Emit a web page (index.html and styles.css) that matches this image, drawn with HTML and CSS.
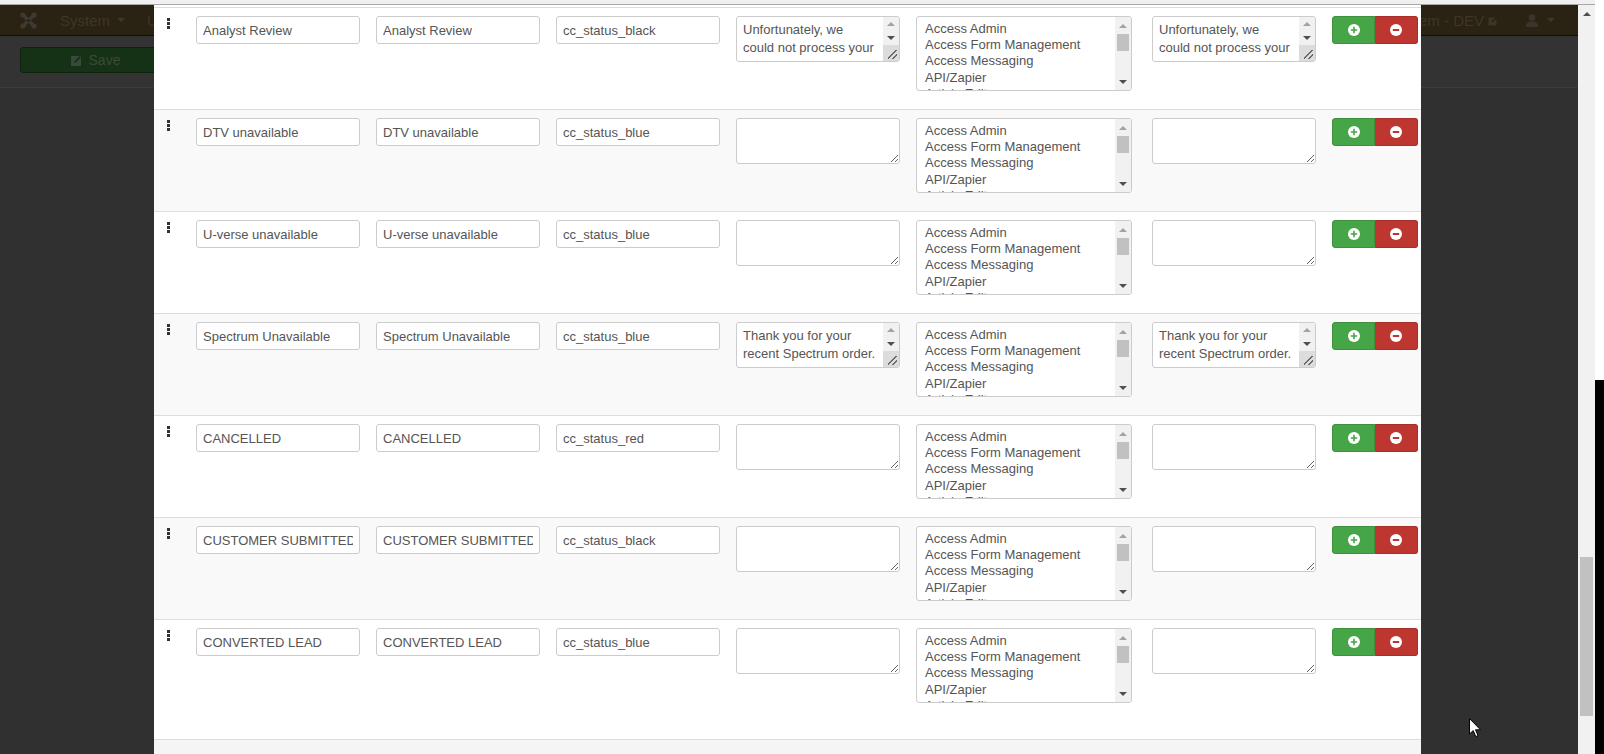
FILE: index.html
```html
<!DOCTYPE html>
<html lang="en">
<head>
    <meta charset="UTF-8">
    <title>Statuses - DEV</title>
    <link rel="stylesheet" href="styles.css">
</head>
<body>
<div class="screen">
    <div class="window">
        <div class="topbar"></div>
        <div class="viewport">
            <div class="page">
                <header class="navbar">
                    <svg class="logo" width="17" height="17" viewBox="0 0 17 17">
                        <circle cx="3" cy="3" r="2.6" fill="#3d3a33"/>
                        <circle cx="14" cy="3" r="2.6" fill="#3d3a33"/>
                        <circle cx="3" cy="14" r="2.6" fill="#3d3a33"/>
                        <circle cx="14" cy="14" r="2.6" fill="#3d3a33"/>
                        <path d="M3 3 L14 14 M14 3 L3 14" stroke="#3d3a33" stroke-width="3.4"/>
                        <circle cx="8.5" cy="8.5" r="1.6" fill="#2a2212"/>
                    </svg>
                    <span class="nav-item">System <i class="caret"></i></span>
                    <span class="nav-item">Users <i class="caret"></i></span>
                    <div class="nav-right">
                        <span class="nav-item">Comm System - DEV
                            <svg width="11" height="11" viewBox="0 0 11 11"><rect x="0.5" y="2.5" width="8" height="8" fill="#3a3528"/><path d="M4 7 L10 1 M6 0.8 H10.2 V5" stroke="#2a2212" stroke-width="1.6" fill="none"/></svg>
                        </span>
                        <span class="nav-user">
                            <svg width="12" height="13" viewBox="0 0 12 13"><circle cx="6" cy="3.6" r="3.4" fill="#3a3528"/><path d="M0 13 C0 8 2.5 7.5 6 7.5 C9.5 7.5 12 8 12 13 Z" fill="#3a3528"/></svg>
                            <i class="caret"></i>
                        </span>
                    </div>
                </header>
                <div class="toolbar">
                    <button class="btn-save" type="button">
                        <svg width="11" height="11" viewBox="0 0 11 11"><rect x="0" y="1" width="10" height="10" rx="1" fill="#3a4a3a"/><path d="M3 8 L3.5 6 L8.5 1 L10 2.5 L5 7.5 Z" fill="#163418"/></svg>
                        Save
                    </button>
                </div>

                <div class="modal">
                    <div class="modal-body">
                        <div class="status-row">
                            <div class="handle"><span></span><span></span><span></span></div>
                            <input class="field" type="text" value="Analyst Review">
                            <input class="field" type="text" value="Analyst Review">
                            <input class="field" type="text" value="cc_status_black">
                            <div class="scroll-box">
                                <textarea class="msg msg-long">Unfortunately, we could not process your order and had to cancel it.</textarea>
                                <div class="sbar sbar-msg"><i class="arr-up"></i><i class="arr-down"></i><span class="sbar-corner"></span></div>
                            </div>
                            <div class="scroll-box list-box">
                                <select class="groups" multiple>
                                    <option>Access Admin</option><option>Access Form Management</option><option>Access Messaging</option><option>API/Zapier</option><option>Article Editor</option><option>Article Manager</option><option>Billing</option><option>Customer Service</option><option>Lead Manager</option><option>Reports</option><option>Super User</option>
                                </select>
                                <div class="sbar sbar-list"><i class="arr-up"></i><span class="sbar-thumb"></span><i class="arr-down"></i></div>
                            </div>
                            <div class="scroll-box">
                                <textarea class="msg msg-long">Unfortunately, we could not process your order and had to cancel it.</textarea>
                                <div class="sbar sbar-msg"><i class="arr-up"></i><i class="arr-down"></i><span class="sbar-corner"></span></div>
                            </div>
                            <div class="btn-group">
                                <button class="btn-add" type="button"><svg width="12" height="12" viewBox="0 0 12 12"><circle cx="6" cy="6" r="6" fill="#fff"/><path d="M6 2.8 V9.2 M2.8 6 H9.2" stroke="#46a546" stroke-width="1.6"/></svg></button>
                                <button class="btn-remove" type="button"><svg width="12" height="12" viewBox="0 0 12 12"><circle cx="6" cy="6" r="6" fill="#fff"/><path d="M2.8 6 H9.2" stroke="#bd362f" stroke-width="2"/></svg></button>
                            </div>
                        </div>

                        <div class="status-row">
                            <div class="handle"><span></span><span></span><span></span></div>
                            <input class="field" type="text" value="DTV unavailable">
                            <input class="field" type="text" value="DTV unavailable">
                            <input class="field" type="text" value="cc_status_blue">
                            <textarea class="msg"></textarea>
                            <div class="scroll-box list-box">
                                <select class="groups" multiple>
                                    <option>Access Admin</option><option>Access Form Management</option><option>Access Messaging</option><option>API/Zapier</option><option>Article Editor</option><option>Article Manager</option><option>Billing</option><option>Customer Service</option><option>Lead Manager</option><option>Reports</option><option>Super User</option>
                                </select>
                                <div class="sbar sbar-list"><i class="arr-up"></i><span class="sbar-thumb"></span><i class="arr-down"></i></div>
                            </div>
                            <textarea class="msg"></textarea>
                            <div class="btn-group">
                                <button class="btn-add" type="button"><svg width="12" height="12" viewBox="0 0 12 12"><circle cx="6" cy="6" r="6" fill="#fff"/><path d="M6 2.8 V9.2 M2.8 6 H9.2" stroke="#46a546" stroke-width="1.6"/></svg></button>
                                <button class="btn-remove" type="button"><svg width="12" height="12" viewBox="0 0 12 12"><circle cx="6" cy="6" r="6" fill="#fff"/><path d="M2.8 6 H9.2" stroke="#bd362f" stroke-width="2"/></svg></button>
                            </div>
                        </div>

                        <div class="status-row">
                            <div class="handle"><span></span><span></span><span></span></div>
                            <input class="field" type="text" value="U-verse unavailable">
                            <input class="field" type="text" value="U-verse unavailable">
                            <input class="field" type="text" value="cc_status_blue">
                            <textarea class="msg"></textarea>
                            <div class="scroll-box list-box">
                                <select class="groups" multiple>
                                    <option>Access Admin</option><option>Access Form Management</option><option>Access Messaging</option><option>API/Zapier</option><option>Article Editor</option><option>Article Manager</option><option>Billing</option><option>Customer Service</option><option>Lead Manager</option><option>Reports</option><option>Super User</option>
                                </select>
                                <div class="sbar sbar-list"><i class="arr-up"></i><span class="sbar-thumb"></span><i class="arr-down"></i></div>
                            </div>
                            <textarea class="msg"></textarea>
                            <div class="btn-group">
                                <button class="btn-add" type="button"><svg width="12" height="12" viewBox="0 0 12 12"><circle cx="6" cy="6" r="6" fill="#fff"/><path d="M6 2.8 V9.2 M2.8 6 H9.2" stroke="#46a546" stroke-width="1.6"/></svg></button>
                                <button class="btn-remove" type="button"><svg width="12" height="12" viewBox="0 0 12 12"><circle cx="6" cy="6" r="6" fill="#fff"/><path d="M2.8 6 H9.2" stroke="#bd362f" stroke-width="2"/></svg></button>
                            </div>
                        </div>

                        <div class="status-row">
                            <div class="handle"><span></span><span></span><span></span></div>
                            <input class="field" type="text" value="Spectrum Unavailable">
                            <input class="field" type="text" value="Spectrum Unavailable">
                            <input class="field" type="text" value="cc_status_blue">
                            <div class="scroll-box">
                                <textarea class="msg msg-long">Thank you for your recent Spectrum order. Unfortunately, Spectrum service is not available at your address.</textarea>
                                <div class="sbar sbar-msg"><i class="arr-up"></i><i class="arr-down"></i><span class="sbar-corner"></span></div>
                            </div>
                            <div class="scroll-box list-box">
                                <select class="groups" multiple>
                                    <option>Access Admin</option><option>Access Form Management</option><option>Access Messaging</option><option>API/Zapier</option><option>Article Editor</option><option>Article Manager</option><option>Billing</option><option>Customer Service</option><option>Lead Manager</option><option>Reports</option><option>Super User</option>
                                </select>
                                <div class="sbar sbar-list"><i class="arr-up"></i><span class="sbar-thumb"></span><i class="arr-down"></i></div>
                            </div>
                            <div class="scroll-box">
                                <textarea class="msg msg-long">Thank you for your recent Spectrum order. Unfortunately, Spectrum service is not available at your address.</textarea>
                                <div class="sbar sbar-msg"><i class="arr-up"></i><i class="arr-down"></i><span class="sbar-corner"></span></div>
                            </div>
                            <div class="btn-group">
                                <button class="btn-add" type="button"><svg width="12" height="12" viewBox="0 0 12 12"><circle cx="6" cy="6" r="6" fill="#fff"/><path d="M6 2.8 V9.2 M2.8 6 H9.2" stroke="#46a546" stroke-width="1.6"/></svg></button>
                                <button class="btn-remove" type="button"><svg width="12" height="12" viewBox="0 0 12 12"><circle cx="6" cy="6" r="6" fill="#fff"/><path d="M2.8 6 H9.2" stroke="#bd362f" stroke-width="2"/></svg></button>
                            </div>
                        </div>

                        <div class="status-row">
                            <div class="handle"><span></span><span></span><span></span></div>
                            <input class="field" type="text" value="CANCELLED">
                            <input class="field" type="text" value="CANCELLED">
                            <input class="field" type="text" value="cc_status_red">
                            <textarea class="msg"></textarea>
                            <div class="scroll-box list-box">
                                <select class="groups" multiple>
                                    <option>Access Admin</option><option>Access Form Management</option><option>Access Messaging</option><option>API/Zapier</option><option>Article Editor</option><option>Article Manager</option><option>Billing</option><option>Customer Service</option><option>Lead Manager</option><option>Reports</option><option>Super User</option>
                                </select>
                                <div class="sbar sbar-list"><i class="arr-up"></i><span class="sbar-thumb"></span><i class="arr-down"></i></div>
                            </div>
                            <textarea class="msg"></textarea>
                            <div class="btn-group">
                                <button class="btn-add" type="button"><svg width="12" height="12" viewBox="0 0 12 12"><circle cx="6" cy="6" r="6" fill="#fff"/><path d="M6 2.8 V9.2 M2.8 6 H9.2" stroke="#46a546" stroke-width="1.6"/></svg></button>
                                <button class="btn-remove" type="button"><svg width="12" height="12" viewBox="0 0 12 12"><circle cx="6" cy="6" r="6" fill="#fff"/><path d="M2.8 6 H9.2" stroke="#bd362f" stroke-width="2"/></svg></button>
                            </div>
                        </div>

                        <div class="status-row">
                            <div class="handle"><span></span><span></span><span></span></div>
                            <input class="field" type="text" value="CUSTOMER SUBMITTED">
                            <input class="field" type="text" value="CUSTOMER SUBMITTED">
                            <input class="field" type="text" value="cc_status_black">
                            <textarea class="msg"></textarea>
                            <div class="scroll-box list-box">
                                <select class="groups" multiple>
                                    <option>Access Admin</option><option>Access Form Management</option><option>Access Messaging</option><option>API/Zapier</option><option>Article Editor</option><option>Article Manager</option><option>Billing</option><option>Customer Service</option><option>Lead Manager</option><option>Reports</option><option>Super User</option>
                                </select>
                                <div class="sbar sbar-list"><i class="arr-up"></i><span class="sbar-thumb"></span><i class="arr-down"></i></div>
                            </div>
                            <textarea class="msg"></textarea>
                            <div class="btn-group">
                                <button class="btn-add" type="button"><svg width="12" height="12" viewBox="0 0 12 12"><circle cx="6" cy="6" r="6" fill="#fff"/><path d="M6 2.8 V9.2 M2.8 6 H9.2" stroke="#46a546" stroke-width="1.6"/></svg></button>
                                <button class="btn-remove" type="button"><svg width="12" height="12" viewBox="0 0 12 12"><circle cx="6" cy="6" r="6" fill="#fff"/><path d="M2.8 6 H9.2" stroke="#bd362f" stroke-width="2"/></svg></button>
                            </div>
                        </div>

                        <div class="status-row">
                            <div class="handle"><span></span><span></span><span></span></div>
                            <input class="field" type="text" value="CONVERTED LEAD">
                            <input class="field" type="text" value="CONVERTED LEAD">
                            <input class="field" type="text" value="cc_status_blue">
                            <textarea class="msg"></textarea>
                            <div class="scroll-box list-box">
                                <select class="groups" multiple>
                                    <option>Access Admin</option><option>Access Form Management</option><option>Access Messaging</option><option>API/Zapier</option><option>Article Editor</option><option>Article Manager</option><option>Billing</option><option>Customer Service</option><option>Lead Manager</option><option>Reports</option><option>Super User</option>
                                </select>
                                <div class="sbar sbar-list"><i class="arr-up"></i><span class="sbar-thumb"></span><i class="arr-down"></i></div>
                            </div>
                            <textarea class="msg"></textarea>
                            <div class="btn-group">
                                <button class="btn-add" type="button"><svg width="12" height="12" viewBox="0 0 12 12"><circle cx="6" cy="6" r="6" fill="#fff"/><path d="M6 2.8 V9.2 M2.8 6 H9.2" stroke="#46a546" stroke-width="1.6"/></svg></button>
                                <button class="btn-remove" type="button"><svg width="12" height="12" viewBox="0 0 12 12"><circle cx="6" cy="6" r="6" fill="#fff"/><path d="M2.8 6 H9.2" stroke="#bd362f" stroke-width="2"/></svg></button>
                            </div>
                        </div>
                    </div>
                    <div class="modal-footer"></div>
                </div>
            </div>
            <div class="vscroll">
                <span class="vscroll-up"></span>
                <span class="vscroll-thumb"></span>
            </div>
        </div>
    </div>
    <div class="edge"></div>
    <svg class="cursor" width="13" height="20" viewBox="0 0 13 20">
        <path d="M0.5 0.5 V16 L4.2 12.6 L6.8 18.6 L9 17.6 L6.5 11.8 H11.5 Z" fill="#fff" stroke="#000" stroke-width="1"/>
    </svg>
</div>
</body>
</html>
```

FILE: styles.css
```css
* {
    box-sizing: border-box;
}
body {
    margin: 0;
    overflow: hidden;
    font-family: "Liberation Sans", Arial, sans-serif;
    color: #555;
}
.screen {
    position: relative;
    display: flex;
    width: 1604px;
    height: 754px;
}
.window {
    width: 1595px;
    display: flex;
    flex-direction: column;
}
.topbar {
    height: 5px;
    background-color: #f0f0f0;
    border-bottom: 1px solid #a8a8a8;
}
.viewport {
    flex: 1;
    display: flex;
    min-height: 0;
}
.page {
    position: relative;
    width: 1578px;
    background-color: #303030;
    overflow: hidden;
}
.edge {
    width: 9px;
    background: linear-gradient(#fff 0 380px, #000 380px);
}

/* dimmed admin page behind the modal */
.navbar {
    display: flex;
    align-items: center;
    height: 31px;
    padding: 0 23px 0 20px;
    background-color: #2a2212;
    border-bottom: 1px solid #140f06;
    font-size: 15px;
    color: #3d3729;
}
.logo {
    margin-right: 23px;
}
.nav-item {
    display: flex;
    align-items: center;
    gap: 4px;
    margin-right: 22px;
}
.caret {
    width: 0;
    height: 0;
    margin-left: 3px;
    border-left: 4px solid transparent;
    border-right: 4px solid transparent;
    border-top: 4px solid #3d3729;
}
.nav-right {
    display: flex;
    align-items: center;
    margin-left: auto;
}
.nav-right .nav-item {
    margin-right: 27px;
}
.nav-user {
    display: flex;
    align-items: center;
    gap: 6px;
}
.toolbar {
    height: 52px;
    padding: 11px 20px;
    background-color: #333;
    border-bottom: 1px solid #3b3b3b;
}
.btn-save {
    display: flex;
    align-items: center;
    justify-content: center;
    gap: 7px;
    width: 151px;
    height: 26px;
    background-color: #163216;
    border: 1px solid #0e220f;
    border-radius: 3px;
    font-family: "Liberation Sans", Arial, sans-serif;
    font-size: 14px;
    color: #3a4a3a;
}

/* modal */
.modal {
    position: absolute;
    top: 0;
    left: 154px;
    width: 1267px;
    height: 100%;
    display: flex;
    flex-direction: column;
    background-color: #fff;
}
.modal-body {
    padding-top: 2px;
}
.status-row {
    display: flex;
    align-items: flex-start;
    gap: 16px;
    height: 102px;
    padding: 8px 0 0 13px;
    border-top: 1px solid #ddd;
}
.status-row:nth-child(even) {
    background-color: #f9f9f9;
}
.status-row:last-child {
    height: 120px;
}
.modal-footer {
    flex: 1;
    background-color: #f5f5f5;
    border-top: 1px solid #ddd;
}
.handle {
    display: flex;
    flex-direction: column;
    gap: 1px;
    width: 13px;
    padding-top: 2px;
}
.handle span {
    width: 3px;
    height: 3px;
    background-color: #333;
}
.field, .msg, .groups {
    font-family: "Liberation Sans", Arial, sans-serif;
    font-size: 13px;
    color: #555;
    background-color: #fff;
    border: 1px solid #ccc;
    border-radius: 3px;
    margin: 0;
    outline: none;
}
.field {
    width: 164px;
    height: 28px;
    padding: 4px 6px;
    line-height: 18px;
}
.msg {
    display: block;
    width: 164px;
    height: 46px;
    padding: 4px 6px;
    line-height: 18px;
    resize: vertical;
}
.msg-long {
    padding-right: 22px;
    overflow: hidden;
    resize: none;
}
.groups {
    display: block;
    width: 216px;
    height: 75px;
    padding: 4px 6px;
    overflow: hidden;
}
.groups option {
    padding: 0 2px 1.2px;
    color: #555;
}

/* drawn scrollbars of the filled controls */
.scroll-box {
    position: relative;
}
.list-box {
    margin-right: 4px;
}
.sbar {
    position: absolute;
    top: 1px;
    right: 1px;
    bottom: 1px;
    display: flex;
    flex-direction: column;
    align-items: center;
    width: 16px;
    background-color: #f1f1f1;
    border-radius: 0 2px 2px 0;
}
.arr-up, .arr-down {
    display: flex;
    align-items: center;
    justify-content: center;
    width: 100%;
    height: 14px;
}
.arr-up::before {
    content: "";
    border-left: 4px solid transparent;
    border-right: 4px solid transparent;
    border-bottom: 4px solid #a3a3a3;
}
.arr-down::before {
    content: "";
    border-left: 4px solid transparent;
    border-right: 4px solid transparent;
    border-top: 4px solid #505050;
}
.sbar-corner {
    position: relative;
    flex: 1;
    width: 100%;
    background-color: #dcdcdc;
}
.sbar-corner::after {
    content: "";
    position: absolute;
    right: 2px;
    bottom: 2px;
    width: 9px;
    height: 9px;
    background: linear-gradient(135deg, transparent 0 44%, #6a6a6a 44% 52%, transparent 52% 70%, #6a6a6a 70% 78%, transparent 78%);
}
.sbar-list .arr-up, .sbar-list .arr-down {
    height: 17px;
}
.sbar-list .arr-down {
    margin-top: auto;
}
.sbar-thumb {
    width: 12px;
    height: 17px;
    background-color: #c1c1c1;
}

.btn-group {
    display: flex;
}
.btn-group button {
    display: flex;
    align-items: center;
    justify-content: center;
    width: 43px;
    height: 28px;
    padding: 0;
}
.btn-add {
    background-color: #46a546;
    border: 1px solid #3e923e;
    border-radius: 3px 0 0 3px;
}
.btn-remove {
    background-color: #bd362f;
    border: 1px solid #a5302a;
    border-left: 0;
    border-radius: 0 3px 3px 0;
}

/* browser scrollbar */
.vscroll {
    display: flex;
    flex-direction: column;
    align-items: center;
    width: 17px;
    background-color: #f1f1f1;
}
.vscroll-up {
    width: 0;
    height: 0;
    margin: 7px 0 6px;
    border-left: 4px solid transparent;
    border-right: 4px solid transparent;
    border-bottom: 4px solid #505050;
}
.vscroll-thumb {
    width: 13px;
    height: 159px;
    margin-top: 535px;
    background-color: #c1c1c1;
}
.cursor {
    position: absolute;
    left: 1469px;
    top: 718px;
}
```
